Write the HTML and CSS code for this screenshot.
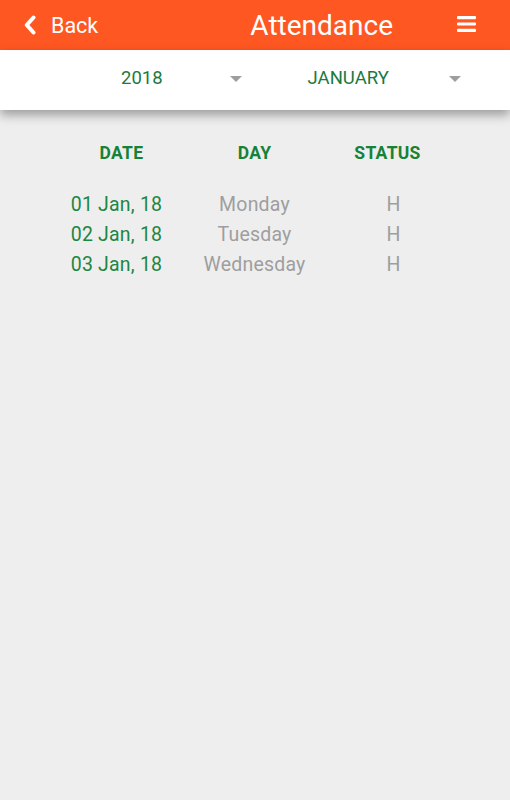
FILE: index.html
```html
<!DOCTYPE html>
<html lang="en">

<head>
    <meta charset="UTF-8">
    <meta name="viewport" content="width=device-width, initial-scale=1.0">
    <title>Attendance</title>
    <link rel="stylesheet" href="styles.css">
</head>

<body>
    <div class="header">
        <div class="back">
            <svg class="chevron" width="12" height="20" viewBox="0 0 12 20">
                <path d="M9.5 2.5 L2.8 10 L9.5 17.5" fill="none" stroke="#fff" stroke-width="4" stroke-linecap="round" stroke-linejoin="round" />
            </svg>
            <span>Back</span>
        </div>
        <div class="title">Attendance</div>
        <svg class="menu" width="19" height="18" viewBox="0 0 19 18">
            <rect x="0" y="1" width="19" height="3.2" rx="1" fill="#fff" />
            <rect x="0" y="7.4" width="19" height="3.2" rx="1" fill="#fff" />
            <rect x="0" y="13.8" width="19" height="3.2" rx="1" fill="#fff" />
        </svg>
    </div>

    <div class="filters">
        <div class="select year">
            <span>2018</span>
            <span class="arrow"></span>
        </div>
        <div class="select month">
            <span>JANUARY</span>
            <span class="arrow"></span>
        </div>
    </div>

    <div class="table">
        <div class="row head">
            <div>DATE</div>
            <div>DAY</div>
            <div>STATUS</div>
        </div>
        <div class="rows">
            <div class="row">
                <div class="date">01 Jan, 18</div>
                <div class="day">Monday</div>
                <div class="status">H</div>
            </div>
            <div class="row">
                <div class="date">02 Jan, 18</div>
                <div class="day">Tuesday</div>
                <div class="status">H</div>
            </div>
            <div class="row">
                <div class="date">03 Jan, 18</div>
                <div class="day">Wednesday</div>
                <div class="status">H</div>
            </div>
        </div>
    </div>
</body>

</html>
```

FILE: styles.css
```css
body {
    font-family: Roboto, "Liberation Sans", sans-serif;
    background-color: #eeeeee;
    margin: 0;
    padding: 0;
    height: 100vh;
}

.header {
    background-color: #ff5722;
    height: 50px;
    display: flex;
    align-items: center;
    padding: 0 34px 0 24px;
    color: #fff;
}

.back {
    display: flex;
    align-items: center;
    font-size: 21.5px;
}

.chevron {
    margin-right: 15px;
}

.title {
    margin-left: auto;
    font-size: 28px;
    margin-top: 1px;
}

.menu {
    margin-left: 64px;
    margin-top: -2px;
}

.filters {
    background-color: #fff;
    height: 56px;
    padding-bottom: 4px;
    display: flex;
    align-items: center;
    padding-left: 121px;
    box-shadow: 0 5px 10px rgba(0, 0, 0, 0.35);
    position: relative;
    color: #1b7a40;
    font-size: 18.5px;
}

.select {
    display: flex;
    align-items: center;
}

.arrow {
    width: 0;
    height: 0;
    margin-top: 2px;
    border-left: 6px solid transparent;
    border-right: 6px solid transparent;
    border-top: 6px solid #9e9e9e;
}

.year .arrow {
    margin-left: 67px;
}

.month {
    margin-left: 66px;
}

.month .arrow {
    margin-left: 60px;
}

.table {
    padding: 31px 0 0 55px;
}

.row {
    display: grid;
    grid-template-columns: 133px 133px 133px;
    text-align: center;
}

.head {
    font-size: 17.5px;
    font-weight: bold;
    color: #158237;
    line-height: 24px;
    letter-spacing: 0.3px;
}

.rows {
    margin-top: 25px;
}

.rows .row {
    font-size: 19.5px;
    line-height: 30px;
    letter-spacing: 0.2px;
}

.date {
    color: #1e8642;
    padding-right: 10px;
}

.day {
    color: #9e9e9e;
}

.status {
    color: #9e9e9e;
    padding-left: 12px;
}
```
